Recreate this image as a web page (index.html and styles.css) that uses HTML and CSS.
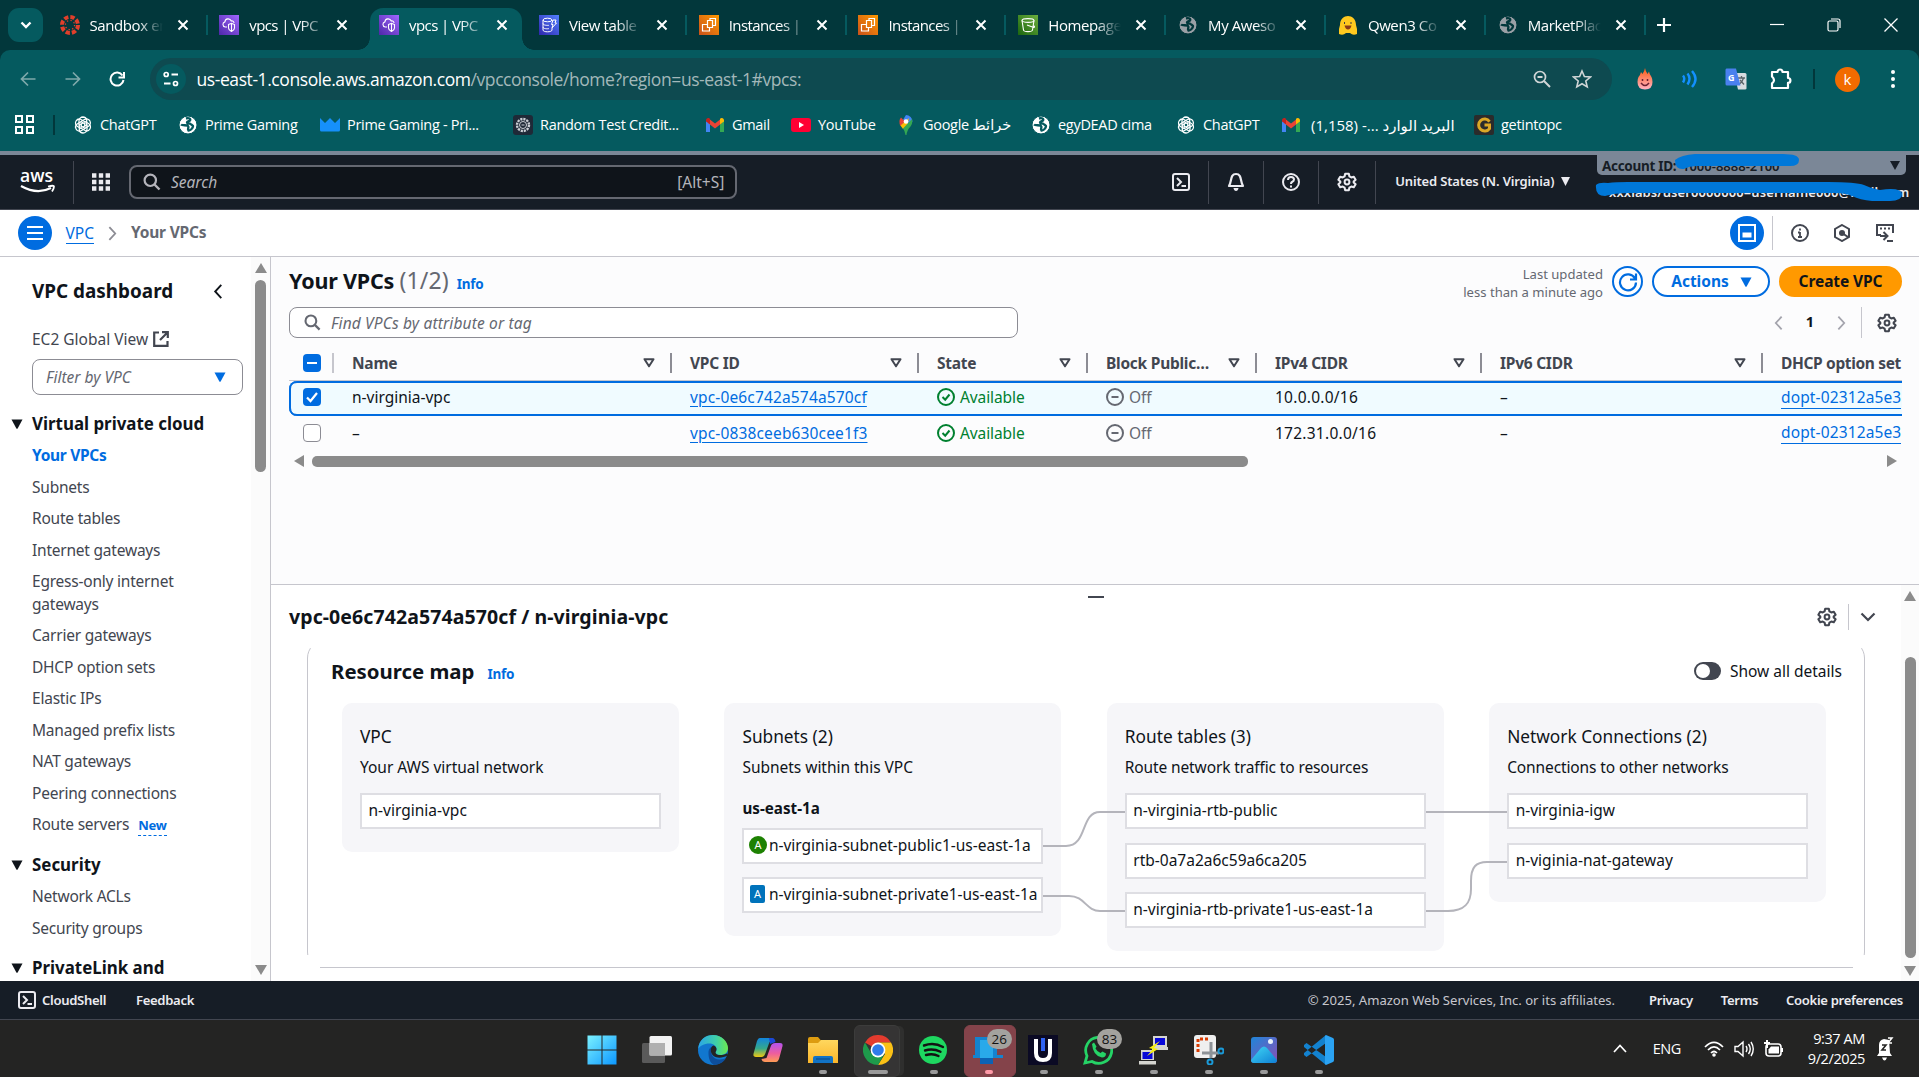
FILE: index.html
```html
<!DOCTYPE html>
<html lang="en">
<head>
<meta charset="utf-8">
<title>vpcs | VPC Console</title>
<link rel="stylesheet" href="styles.css">
</head>
<body>
<svg class="defs" width="0" height="0" aria-hidden="true">
<defs>
<linearGradient id="gPurple" x1="0" y1="1" x2="1" y2="0"><stop offset="0" stop-color="#4d27a8"/><stop offset="1" stop-color="#a166ff"/></linearGradient>
<linearGradient id="gBlue" x1="0" y1="1" x2="1" y2="0"><stop offset="0" stop-color="#2e27ad"/><stop offset="1" stop-color="#527fff"/></linearGradient>
<linearGradient id="gOrange" x1="0" y1="1" x2="1" y2="0"><stop offset="0" stop-color="#c8511b"/><stop offset="1" stop-color="#f90"/></linearGradient>
<linearGradient id="gGreen" x1="0" y1="1" x2="1" y2="0"><stop offset="0" stop-color="#1b660f"/><stop offset="1" stop-color="#6cae3e"/></linearGradient>
<linearGradient id="gWin" gradientUnits="userSpaceOnUse" x1="0" y1="0" x2="30" y2="30"><stop offset="0" stop-color="#7df3ff"/><stop offset="1" stop-color="#0a95ff"/></linearGradient>
<linearGradient id="gEdge" x1="0" y1="0" x2="1" y2="0"><stop offset="0" stop-color="#2aa5e8"/><stop offset=".6" stop-color="#3fd0a8"/><stop offset="1" stop-color="#6ce84f"/></linearGradient>
<linearGradient id="gCopA" x1="0" y1="0" x2="0" y2="1"><stop offset="0" stop-color="#1285dc"/><stop offset=".55" stop-color="#35a98c"/><stop offset="1" stop-color="#f0c811"/></linearGradient>
<linearGradient id="gCopB" x1="0" y1="0" x2="0" y2="1"><stop offset="0" stop-color="#b452f0"/><stop offset=".55" stop-color="#ee5e9d"/><stop offset="1" stop-color="#ff9c54"/></linearGradient>
<linearGradient id="gFold" x1="0" y1="0" x2="0" y2="1"><stop offset="0" stop-color="#ffd75e"/><stop offset="1" stop-color="#fbb62a"/></linearGradient>
<linearGradient id="gFire" x1="0" y1="0" x2="0" y2="1"><stop offset="0" stop-color="#ff5a10"/><stop offset="1" stop-color="#ffb3c4"/></linearGradient>
<linearGradient id="gPhoto" x1="0" y1="0" x2="1" y2="1"><stop offset="0" stop-color="#1f86d9"/><stop offset="1" stop-color="#8a4fb5"/></linearGradient>
<linearGradient id="gPhoto2" x1="0" y1="0" x2="1" y2="1"><stop offset="0" stop-color="#40d8f5"/><stop offset="1" stop-color="#0f7fd4"/></linearGradient>
<symbol id="x" viewBox="0 0 12 12"><path d="M1.500 1.500l9 9M10.500 1.500l-9 9" stroke="#fff" stroke-width="2" fill="none"/></symbol>
<symbol id="vpc" viewBox="0 0 20 20"><path fill="url(#gPurple)" d="M0 0h20v20H0z"/><path d="M8 12H6.200a2.600 2.600 0 0 1-.3-5.100C6.200 3.200 11 2.800 12.300 6c1.700-.4 2.700.8 2.700 2M9.500 9.500l3-1.200 3 1.200v3.500c0 2-3 3.500-3 3.500s-3-1.500-3-3.500zM12.500 9v7" fill="none" stroke="#fff" stroke-width="1.100"/></symbol>
<symbol id="ddb" viewBox="0 0 20 20"><path fill="url(#gBlue)" d="M0 0h20v20H0z"/><ellipse cx="8.500" cy="5" rx="4.500" ry="1.800" fill="none" stroke="#fff"/><path d="M4 5v10c0 2.400 9 2.400 9 0v-2M4 8.500c0 2 5 2 6 1.800M4 12c0 2 5 2 6 1.500M13 5v1M14 5h3l-1 3h1.500L13 13l1-3.500h-1.500z" fill="none" stroke="#fff"/></symbol>
<symbol id="ec2" viewBox="0 0 20 20"><path fill="url(#gOrange)" d="M0 0h20v20H0z"/><path d="M8.500 5.500h5v7h-5zM11 5.500v-2h5.500v7h-3M8.500 9.500h-5v6.500h7v-3.500" fill="none" stroke="#fff" stroke-width="1.200"/></symbol>
<symbol id="s3" viewBox="0 0 20 20"><path fill="url(#gGreen)" d="M0 0h20v20H0z"/><ellipse cx="10" cy="5.500" rx="6" ry="1.900" fill="none" stroke="#fff" stroke-width="1.100"/><path d="M4 5.500L5.500 15c.5 2.200 8.500 2.200 9 0L16 5.500M9 10l6 2.300c2.500.4 1.500-1.500 0-2" fill="none" stroke="#fff" stroke-width="1.100"/></symbol>
<symbol id="globe" viewBox="0 0 20 20"><circle cx="10" cy="10" r="9" fill="currentColor"/><path d="M8 3.500c3-1 5 .5 4 2-.5 1-3 .5-3 2s2.500.5 3.500 1.500 3 1 2.500 2.500c-.7 2.500-3 4-4.500 4-1.500-2 1-3-.5-4.500S4.500 11 3 9.500" class="cut" fill="none" stroke-width="2.400"/></symbol>
<symbol id="gpt" viewBox="0 0 20 20"><g fill="none" stroke="#fff" stroke-width="1.300"><path id="petal" d="M10 2a4 4 0 0 1 3.700 2.500v5.500L9.500 12.300M10 2a4 4 0 0 0-4 4v4.500"/><use href="#petal" transform="rotate(60 10 10)"/><use href="#petal" transform="rotate(120 10 10)"/><use href="#petal" transform="rotate(180 10 10)"/><use href="#petal" transform="rotate(240 10 10)"/><use href="#petal" transform="rotate(300 10 10)"/></g></symbol>
<symbol id="gmail" viewBox="0 0 20 20"><path fill="#4285f4" d="M1 5v12h4V8z"/><path fill="#34a853" d="M19 5v12h-4V8z"/><path fill="#ea4335" d="M3 3l7 5.500L17 3v5l-7 5.500L3 8z"/><path fill="#c5221f" d="M1 5.500C1 3 3.200 2.300 5 3.700v5.500L1 6.500z"/><path fill="#fbbc04" d="M19 5.500c0-2.500-2.200-3.200-4-1.800v5.500l4-2.700z"/></symbol>
<symbol id="gear" viewBox="0 0 20 20"><path d="M8.200 1.800h3.600l.6 2.500 1.900 1.100 2.500-.7 1.800 3.100-1.900 1.800v.8l1.900 1.800-1.800 3.100-2.500-.7-1.900 1.100-.6 2.500H8.200l-.6-2.500-1.900-1.100-2.500.7-1.800-3.100 1.900-1.800v-.8L1.400 7.800l1.800-3.100 2.500.7 1.900-1.100z" fill="none" stroke="currentColor" stroke-width="2.100" stroke-linejoin="round"/><circle cx="10" cy="10" r="2.400" fill="none" stroke="currentColor" stroke-width="2"/></symbol>
<symbol id="shell" viewBox="0 0 18 18"><rect x="1" y="1" width="16" height="16" rx="2" fill="none" stroke="currentColor" stroke-width="2"/><path d="M5 5l4 4-4 4M9.500 13H14" fill="none" stroke="currentColor" stroke-width="2"/></symbol>
<symbol id="search" viewBox="0 0 18 18"><circle cx="7.300" cy="7.300" r="5.700" fill="none" stroke="currentColor" stroke-width="2.200"/><path d="M11.500 11.500l5 5" stroke="currentColor" stroke-width="2.400"/></symbol>
<symbol id="filt" viewBox="0 0 12 10"><path d="M1.500 1.200h9L6 8.300z" fill="none" stroke="#424650" stroke-width="2" stroke-linejoin="round"/></symbol>
<symbol id="tri" viewBox="0 0 12 10"><path d="M.5.500h11L6.500 9.700h-1z" fill="currentColor"/></symbol>
<symbol id="left" viewBox="0 0 10 16"><path d="M8.500 1L2 8l6.500 7" fill="none" stroke="currentColor" stroke-width="2"/></symbol>
<symbol id="ok" viewBox="0 0 18 18"><circle cx="9" cy="9" r="8" fill="none" stroke="#00802f" stroke-width="2"/><path d="M5.500 9l2.700 2.700 4.300-5.200" fill="none" stroke="#00802f" stroke-width="2"/></symbol>
<symbol id="off" viewBox="0 0 18 18"><circle cx="9" cy="9" r="8" fill="none" stroke="#656871" stroke-width="2"/><path d="M5.500 9h7" stroke="#656871" stroke-width="2"/></symbol>
</defs>
</svg>

<div class="tabs">
  <div class="tabsearch"><svg width="12" height="8" viewBox="0 0 12 8"><path d="M1.500 1.500L6 6l4.500-4.500" fill="none" stroke="#fff" stroke-width="2.400"/></svg></div>
  <div class="tab"><svg class="fav" viewBox="0 0 20 20"><circle cx="10" cy="10" r="8" fill="none" stroke="#e13f2b" stroke-width="4" stroke-dasharray="4.300 2"/><circle cx="10" cy="10" r="4.600" fill="none" stroke="#e13f2b" stroke-width="1.300" stroke-dasharray="1.300 2.300"/></svg><span>Sandbox en</span><svg class="cl"><use href="#x"/></svg><i></i></div>
  <div class="tab"><svg class="fav"><use href="#vpc"/></svg><span class="sh">vpcs | VPC</span><svg class="cl"><use href="#x"/></svg></div>
  <div class="tab active"><svg class="fav"><use href="#vpc"/></svg><span class="sh">vpcs | VPC</span><svg class="cl"><use href="#x"/></svg></div>
  <div class="tab"><svg class="fav"><use href="#ddb"/></svg><span>View table</span><svg class="cl"><use href="#x"/></svg><i></i></div>
  <div class="tab"><svg class="fav"><use href="#ec2"/></svg><span class="sh">Instances |</span><svg class="cl"><use href="#x"/></svg><i></i></div>
  <div class="tab"><svg class="fav"><use href="#ec2"/></svg><span class="sh">Instances |</span><svg class="cl"><use href="#x"/></svg><i></i></div>
  <div class="tab"><svg class="fav"><use href="#s3"/></svg><span>Homepage</span><svg class="cl"><use href="#x"/></svg><i></i></div>
  <div class="tab"><svg class="fav gray"><use href="#globe"/></svg><span>My Aweso</span><svg class="cl"><use href="#x"/></svg><i></i></div>
  <div class="tab"><svg class="fav" viewBox="0 0 20 20"><path d="M1 19v-5l1-4c0-12 16-12 16 0l1 4v5q-4 2-7-1H8q-3 3-7 1z" fill="#ffc91f"/><path d="M6 8h1M12.500 8h1" stroke="#3a3b45" stroke-width="2"/><path d="M6.500 10.500h7q-1 4-3.500 4t-3.500-4z" fill="#8b3a16"/></svg><span>Qwen3 Co</span><svg class="cl"><use href="#x"/></svg><i></i></div>
  <div class="tab"><svg class="fav gray"><use href="#globe"/></svg><span>MarketPlac</span><svg class="cl"><use href="#x"/></svg><i></i></div>
  <svg class="plus" width="14" height="14" viewBox="0 0 14 14"><path d="M7 0v14M0 7h14" stroke="#fff" stroke-width="2.200"/></svg>
  <div class="wctl">
    <svg width="14" height="14" viewBox="0 0 14 14"><path d="M0 6.500h14" stroke="#fff" stroke-width="1.200"/></svg>
    <svg width="14" height="14" viewBox="0 0 14 14"><rect x="1" y="3" width="10" height="10" rx="1.500" fill="none" stroke="#fff" stroke-width="1.200"/><path d="M4 1h7q2 0 2 2v7" fill="none" stroke="#fff" stroke-width="1.200"/></svg>
    <svg width="14" height="14" viewBox="0 0 14 14"><path d="M.5.500l13 13M13.500.500l-13 13" stroke="#fff" stroke-width="1.300"/></svg>
  </div>
</div>

<div class="nav">
  <svg width="16" height="16" viewBox="0 0 16 16"><path d="M15.500 8H1.500M8 1.500L1.500 8 8 14.500" fill="none" stroke="#7fa9ab" stroke-width="1.700"/></svg>
  <svg width="16" height="16" viewBox="0 0 16 16"><path d="M.5 8h14M8 1.500L14.500 8 8 14.500" fill="none" stroke="#7fa9ab" stroke-width="1.700"/></svg>
  <svg width="16" height="16" viewBox="0 0 16 16"><path d="M13.500 4.500A6.500 6.500 0 1 0 14.500 9M15 1v5.500H9.500" fill="none" stroke="#fff" stroke-width="2"/></svg>
  <div class="omni">
    <div class="site"><svg width="16" height="16" viewBox="0 0 16 16"><path d="M8.500 3.500H15M1 12.500h6.500" stroke="#fff" stroke-width="1.800"/><circle cx="3.200" cy="3.500" r="2" fill="none" stroke="#fff" stroke-width="1.700"/><circle cx="12.500" cy="12.500" r="2" fill="none" stroke="#fff" stroke-width="1.700"/></svg></div>
    <div class="url">us-east-1.console.aws.amazon.com<span>/vpcconsole/home?region=us-east-1#vpcs:</span></div>
    <svg class="zo" width="18" height="18" viewBox="0 0 18 18"><circle cx="7" cy="7" r="5.500" fill="none" stroke="#d0d5d6" stroke-width="1.700"/><path d="M11 11l6 6M4.500 7h5" stroke="#d0d5d6" stroke-width="2"/></svg>
    <svg width="20" height="20" viewBox="0 0 20 20"><path d="M10 2l2.400 5.500 6 .5-4.600 4 1.400 5.900L10 14.700 4.800 17.900 6.200 12 1.600 8l6-.5z" fill="none" stroke="#d0d5d6" stroke-width="1.600"/></svg>
  </div>
  <div class="exts">
    <svg width="18" height="22" viewBox="0 0 18 22"><path d="M9 0q.5 3 2.500 6L13 3.500q.5 3 2.500 5.500 1 2 1 5 0 7.500-7.500 7.500T1.500 14q0-3 1-5Q4.500 6.500 5 4l1.500 2Q8.500 3 9 0z" fill="url(#gFire)"/><path d="M5 15q4 5 8 0M6.500 11v2M11.500 11v2" fill="none" stroke="#6b2030" stroke-width="1.500"/></svg>
    <svg width="18" height="18" viewBox="0 0 18 18"><path d="M2 5.500q2.500 3 0 7M6.500 3.500q4 5 0 11M11 1q7 8 0 16" fill="none" stroke="#1390ff" stroke-width="2.400"/></svg>
    <svg width="22" height="22" viewBox="0 0 22 22"><path d="M9 5h11q1.500 0 1.500 1.500v14q0 1-1.500 1h-7z" fill="#d8dce0"/><path d="M13 10h7M16.500 8v2M18.500 10q-1 4-4 6M15 12l4 4.500" fill="none" stroke="#5a6368" stroke-width="1.300"/><path d="M1.500.500H11l4.500 17H2Q.5 17.500.5 16V2Q.5.500 1.500.500z" fill="#4a80ee"/><text x="3" y="12.500" class="tg">G</text></svg>
    <svg width="22" height="22" viewBox="0 0 22 22"><path d="M2 4h5.500a2.500 2.500 0 0 1 5 0H18v6a2.400 2.400 0 0 1 0 4.800V20H2v-4.500q4-3 0-7z" fill="none" stroke="#fff" stroke-width="2.200" stroke-linejoin="round"/></svg>
    <i></i>
    <b>k</b>
    <svg width="6" height="20" viewBox="0 0 6 20"><circle cx="3" cy="3" r="2" fill="#fff"/><circle cx="3" cy="10" r="2" fill="#fff"/><circle cx="3" cy="17" r="2" fill="#fff"/></svg>
  </div>
</div>

<div class="marks">
  <svg class="apps" width="19" height="19" viewBox="0 0 19 19"><path d="M1 1h6v6H1zM12 1h6v6h-6zM1 12h6v6H1zM12 12h6v6h-6z" fill="none" stroke="#fff" stroke-width="2"/></svg>
  <i></i>
  <div class="bm w1"><svg><use href="#gpt"/></svg>ChatGPT</div>
  <div class="bm w2"><svg class="wh"><use href="#globe"/></svg>Prime Gaming</div>
  <div class="bm w3"><svg viewBox="0 0 20 20"><path d="M0 3l5 5 5-5 5 5 5-5v12q0 1.500-1.500 1.500h-17Q0 16.500 0 15z" fill="#1690fb"/></svg>Prime Gaming - Pri...</div>
  <div class="bm w4"><svg viewBox="0 0 20 20"><rect width="20" height="20" rx="3" fill="#1f2937"/><circle cx="10" cy="10" r="6" fill="none" stroke="#ccd0d6" stroke-width="2.400" stroke-dasharray="2.200 .9"/><circle cx="10" cy="10" r="3.500" fill="none" stroke="#ccd0d6"/><path d="M8.500 10h3" stroke="#ccd0d6"/></svg>Random Test Credit...</div>
  <div class="bm w5"><svg><use href="#gmail"/></svg>Gmail</div>
  <div class="bm w6"><svg viewBox="0 0 20 20"><rect y="3" width="20" height="14" rx="3" fill="#ff0033"/><path d="M8 7v6l5-3z" fill="#fff"/></svg>YouTube</div>
  <div class="bm w7"><svg viewBox="0 0 20 20"><path d="M10 0a6.500 6.500 0 0 1 6.500 6.500L9 13 4.500 9z" fill="#4285f4"/><path d="M5 2.500L9 6.500 4.500 11Q2 6 5 2.500z" fill="#ea4335"/><path d="M4.500 10.500L13 3l-2 9-4 2z" fill="#fbbc04"/><path d="M16 4q1 4-1.500 7.500Q11 15 10.500 20h-1Q9 16 7 13.500z" fill="#34a853"/><circle cx="10" cy="6.500" r="2.300" fill="#fff"/></svg>Google خرائط</div>
  <div class="bm w8"><svg class="wh"><use href="#globe"/></svg>egyDEAD cima</div>
  <div class="bm w9"><svg><use href="#gpt"/></svg>ChatGPT</div>
  <div class="bm w10"><svg><use href="#gmail"/></svg><bdi class="inbox" dir="ltr">(1,158) -... <bdi>البريد الوارد</bdi></bdi></div>
  <div class="bm"><svg viewBox="0 0 20 20"><rect width="20" height="20" rx="2" fill="#2b2b2b"/><path d="M15.500 6.500a6 6 0 1 0 0 7V10H10.500" fill="none" stroke="#dca826" stroke-width="3"/></svg>getintopc</div>
</div>

<header class="aws">
  <svg class="logo" width="36" height="24" viewBox="0 0 36 24"><text x="0" y="11.500" textLength="33" lengthAdjust="spacingAndGlyphs" class="awst">aws</text><path d="M1 16q16 9 30 2" fill="none" stroke="#fff" stroke-width="2.200"/><path d="M28 16.500q6-1.500 6 0 0 2-2 5" fill="none" stroke="#fff" stroke-width="1.800"/></svg>
  <i></i>
  <svg class="grid" width="18" height="18" viewBox="0 0 18 18"><path d="M0 2.500h18M0 9h18M0 15.500h18" stroke="#ebebf0" stroke-width="4.400" stroke-dasharray="4.400 2.400"/></svg>
  <div class="asearch"><svg width="18" height="18"><use href="#search"/></svg><em>Search</em><span>[Alt+S]</span></div>
  <div class="aicons">
    <svg width="18" height="18"><use href="#shell"/></svg><i></i>
    <svg width="18" height="20" viewBox="0 0 18 20"><path d="M9 2C3 2 5 9 2 14h14C13 9 15 2 9 2z" fill="none" stroke="#ebebf0" stroke-width="2.200" stroke-linejoin="round"/><path d="M6.500 16h5q-.5 3-2.500 3t-2.500-3z" fill="#ebebf0"/></svg><i></i>
    <svg width="18" height="18" viewBox="0 0 18 18"><circle cx="9" cy="9" r="8" fill="none" stroke="#ebebf0" stroke-width="2"/><path d="M6 7q0-3 3-3t3 2.500Q12 8 10 9q-1 .5-1 2M9 12.500v2" fill="none" stroke="#ebebf0" stroke-width="2"/></svg><i></i>
    <svg width="20" height="20"><use href="#gear"/></svg><i></i>
  </div>
  <div class="region">United States (N. Virginia)<svg width="9" height="9" viewBox="0 0 12 10" preserveAspectRatio="none"><path d="M0 0h12L6 10z" fill="#ebebf0"/></svg></div>
  <div class="acct">
    <div class="aid"><b>Account ID:</b><span>1000-8888-2100</span><svg width="10" height="9" viewBox="0 0 12 10" preserveAspectRatio="none"><path d="M0 0h12L6 10z" fill="#161d26"/></svg></div>
    <div class="auser">xxxlabs/user0000000=username000@mail.com</div>
    <svg class="scrib" width="322" height="55" viewBox="0 0 322 55"><path d="M86 8q6-5 20-6h88q16 0 16 6 0 6-9 6h-92q-9 0-14 3-9 1-9-9z" fill="#0078d9"/><path d="M7 33q3-3 12-2 8-1 20-1h200q28 0 36 3 8 4 16 5 21-3 22 4 0 7-12 7h-18q-12-1-20-5-6-3-18-3H40q-14 0-24 3-10 0-9-11z" fill="#0078d9"/></svg>
  </div>
</header>

<div class="crumbs">
  <div class="menu"><svg width="16" height="16" viewBox="0 0 16 16"><path d="M0 2h16M0 8h16M0 14h16" stroke="#fff" stroke-width="2"/></svg></div>
  <a class="vpcl">VPC</a>
  <svg class="flip" width="9" height="15"><use href="#left"/></svg>
  <b>Your VPCs</b>
  <div class="tools">
    <div class="menu"><svg width="18" height="18" viewBox="0 0 18 18"><rect x="1" y="1" width="16" height="16" fill="none" stroke="#fff" stroke-width="2"/><path d="M4.500 8.500h9v5h-9z" fill="#fff"/></svg></div><i></i>
    <svg width="18" height="18" viewBox="0 0 18 18"><circle cx="9" cy="9" r="8" fill="none" stroke="#424650" stroke-width="2"/><path d="M9 8v5.500M9 4.500v2M7 8.500h2M7 13h4" stroke="#424650" stroke-width="1.800"/></svg>
    <svg width="18" height="18" viewBox="0 0 18 18"><path d="M9 1l7 4v8l-7 4-7-4V5z" fill="none" stroke="#424650" stroke-width="2"/><circle cx="9" cy="9" r="3" fill="#424650"/><path d="M9 9l6 4" stroke="#424650" stroke-width="2"/></svg>
    <svg width="20" height="20" viewBox="0 0 20 20"><path d="M6 12H2V2h16v8M12 18h6M5 13h7M8.500 9l4 4-4 4" fill="none" stroke="#424650" stroke-width="2"/><path d="M5 5.500h10" stroke="#424650" stroke-width="2" stroke-dasharray="2 2"/></svg>
  </div>
</div>

<div class="body">
  <nav class="side">
    <div class="list">
      <div class="dash">VPC dashboard<svg width="10" height="15"><use href="#left"/></svg></div>
      <div class="egv">EC2 Global View<svg width="16" height="16" viewBox="0 0 16 16"><path d="M6 1.500H1.200v13.300h13.300V10M9 1.200h5.800V7M14.500 1.500L7 9" fill="none" stroke="#424650" stroke-width="2.200"/></svg></div>
      <div class="sel"><em>Filter by VPC</em><svg width="12" height="10"><use href="#tri"/></svg></div>
      <h4 class="first"><svg width="12" height="10"><use href="#tri"/></svg>Virtual private cloud</h4>
      <a class="cur">Your VPCs</a><a>Subnets</a><a>Route tables</a><a>Internet gateways</a><a class="two">Egress-only internet gateways</a><a>Carrier gateways</a><a>DHCP option sets</a><a>Elastic IPs</a><a>Managed prefix lists</a><a>NAT gateways</a><a>Peering connections</a><a>Route servers<b>New</b></a>
      <h4><svg width="12" height="10"><use href="#tri"/></svg>Security</h4>
      <a>Network ACLs</a><a>Security groups</a>
      <h4><svg width="12" height="10"><use href="#tri"/></svg>PrivateLink and</h4>
    </div>
    <div class="vs"><s class="up"></s><u></u><s class="dn"></s></div>
  </nav>

  <main>
    <section class="top">
      <div class="hd"><h1>Your VPCs <span>(1/2)</span></h1><a class="info">Info</a>
        <div class="upd">Last updated<br>less than a minute ago</div>
        <div class="btn round"><svg width="20" height="20" viewBox="0 0 20 20"><path d="M17 6.500A8 8 0 1 0 18 10.500M18 1.500v6h-6" fill="none" stroke="#006ce0" stroke-width="2.200"/></svg></div>
        <div class="btn act">Actions<svg width="12" height="10"><use href="#tri"/></svg></div>
        <div class="btn cre">Create VPC</div>
      </div>
      <div class="sr">
        <div class="find"><svg width="17" height="17"><use href="#search"/></svg><em>Find VPCs by attribute or tag</em></div>
        <div class="pager"><svg width="9" height="16"><use href="#left"/></svg><b>1</b><svg class="flip" width="9" height="16"><use href="#left"/></svg><i></i><svg class="gr" width="20" height="20"><use href="#gear"/></svg></div>
      </div>
      <div class="tbl">
        <div class="row th"><div class="c0"><span class="cb on"><svg width="18" height="18" viewBox="0 0 18 18"><path d="M4 9h10" stroke="#fff" stroke-width="2"/></svg></span></div>
          <div>Name<svg><use href="#filt"/></svg></div><div>VPC ID<svg><use href="#filt"/></svg></div><div>State<svg><use href="#filt"/></svg></div><div><span class="bp">Block Public…</span><svg><use href="#filt"/></svg></div><div>IPv4 CIDR<svg><use href="#filt"/></svg></div><div>IPv6 CIDR<svg><use href="#filt"/></svg></div><div>DHCP option set</div></div>
        <div class="row r1"><div class="c0"><span class="cb on"><svg width="18" height="18" viewBox="0 0 18 18"><path d="M4 9.500l3.500 3.500L14 5" fill="none" stroke="#fff" stroke-width="2.200"/></svg></span></div>
          <div>n-virginia-vpc</div><div><a class="ln">vpc-0e6c742a574a570cf</a></div><div class="av"><svg><use href="#ok"/></svg>Available</div><div class="of"><svg><use href="#off"/></svg>Off</div><div class="ip">10.0.0.0/16</div><div>–</div><div><a class="ld">dopt-02312a5e3</a></div></div>
        <div class="row r2"><div class="c0"><span class="cb"></span></div>
          <div>–</div><div><a class="ln">vpc-0838ceeb630cee1f3</a></div><div class="av"><svg><use href="#ok"/></svg>Available</div><div class="of"><svg><use href="#off"/></svg>Off</div><div class="ip">172.31.0.0/16</div><div>–</div><div><a class="ld">dopt-02312a5e3</a></div></div>
      </div>
      <div class="hs"><s></s><u></u><s class="r"></s></div>
    </section>
    <section class="split">
      <div class="pane">
        <div class="grip"><i></i></div>
        <div class="ph"><h2>vpc-0e6c742a574a570cf / n-virginia-vpc</h2><svg width="20" height="20"><use href="#gear"/></svg><i></i><svg width="16" height="10" viewBox="0 0 16 10"><path d="M1.500 1.500L8 8l6.500-6.500" fill="none" stroke="#424650" stroke-width="2.200"/></svg></div>
        <div class="clip">
        <div class="card">
          <div class="ch"><h3>Resource map</h3><a class="info">Info</a><div class="tog"></div><span>Show all details</span></div>
          <div class="map">
            <div class="col"><h5>VPC</h5><p>Your AWS virtual network</p><div class="nd">n-virginia-vpc</div></div>
            <div class="col"><h5>Subnets (2)</h5><p>Subnets within this VPC</p><h6>us-east-1a</h6><div class="nd sn"><span class="pub">A</span>n-virginia-subnet-public1-us-east-1a</div><div class="nd sn"><span class="prv">A</span>n-virginia-subnet-private1-us-east-1a</div></div>
            <div class="col"><h5>Route tables (3)</h5><p>Route network traffic to resources</p><div class="nd">n-virginia-rtb-public</div><div class="nd">rtb-0a7a2a6c59a6ca205</div><div class="nd">n-virginia-rtb-private1-us-east-1a</div></div>
            <div class="col"><h5>Network Connections (2)</h5><p>Connections to other networks</p><div class="nd">n-virginia-igw</div><div class="nd">n-viginia-nat-gateway</div></div>
            <svg class="wires" width="1485" height="248" viewBox="342 703 1485 248"><path d="M1043 846h23c22 0 14-34 34-34h25M1043 896h26c16 0 17 15 31 15h25M1426 812h81M1426 911h22c17 0 23-8 23-22v-8c0-14 5-19 16-19h20" fill="none" stroke="#b4b4bb" stroke-width="2"/></svg>
          </div>
        </div>
        </div>
        <div class="cbot"></div>
      </div>
      <div class="vs2"><s class="up"></s><u></u><s class="dn"></s></div>
    </section>
  </main>
</div>

<footer><svg width="18" height="18"><use href="#shell"/></svg><span class="f1">CloudShell</span><span class="f2">Feedback</span><span class="cp">© 2025, Amazon Web Services, Inc. or its affiliates.</span><span class="f3">Privacy</span><span class="f4">Terms</span><span class="f5">Cookie preferences</span></footer>

<div class="task">
  <div class="dock">
    <div><svg viewBox="0 0 30 30"><path d="M.5.500h14v14H.5zM15.500.500h14v14h-14zM.5 15.500h14v14H.5zM15.500 15.500h14v14h-14z" fill="url(#gWin)"/></svg></div>
    <div><svg viewBox="0 0 30 30"><rect x="0" y="8" width="23" height="20" rx="1.500" fill="#5a5a5a"/><rect x="7.500" y="1" width="22.500" height="19.500" rx="1.500" fill="#f2f2f2"/><path d="M7.500 8H23v12.500H7.500z" fill="#b0b0b0"/></svg></div>
    <div><svg viewBox="0 0 30 30"><circle cx="15" cy="15" r="15" fill="#1177cf"/><path d="M.2 14C1 4 8 0 15 0c9 0 15 7 15 13 0 5-4 7-7.500 7-3 0-5-1-5-2.500 0-1 1-1.500 1-3.500 0-3-3-5.500-7-5.500C6 8.500 1.500 11 .2 14z" fill="url(#gEdge)"/><path d="M10.500 18c0-4 2-6 4-6.500-3 5-1 13 7.500 13 3 0 5-1 6-1.500-2 4-7 7-12 7-4-2-5.500-7-5.500-12z" fill="#0d4e9c"/><path d="M17.500 17.500c0-1 1-1.500 1-3.500s-1.500-3-3-3.500c-3 1-4 7 0 10.500 4 2.500 9 2 14-.5 0 0 .5-2-1-2-4 2.500-11 2-11-1z" fill="#242423"/></svg></div>
    <div><svg viewBox="0 0 30 30"><path d="M7 3h11c2 0 3 1 3.500 3l-5 1-4 11c-1 3-2 4-5 4H3c-3 0-3-2-2-5l3-11C5 4 5.500 3 7 3z" fill="url(#gCopA)"/><path d="M16 3h3q3 0 3.500 4L17 9z" fill="#1b48d8"/><path d="M23 27H12c-2 0-3-1-3.500-3l5-1 4-11c1-3 2-4 5-4H27c3 0 3 2 2 5l-3 11c-1 2-1.500 3-3 3z" fill="url(#gCopB)"/></svg></div>
    <div class="run"><svg viewBox="0 0 30 30"><path d="M0 4q0-2 2-2h8l3 3.500h15q2 0 2 2V12H0z" fill="#dd9c10"/><path d="M0 8h10l3-3h17v23H0z" fill="url(#gFold)"/><path d="M5 28v-5q0-2 2-2h16q2 0 2 2v5z" fill="#1273c5"/><path d="M8 24h14" stroke="#0b4d8c" stroke-width="1.200"/></svg></div>
    <div class="run now"><svg viewBox="0 0 30 30"><path d="M15 15L2 7.500A15 15 0 0 1 28 7.500H15z" fill="#e33b2e"/><path d="M15 7.500h13A15 15 0 0 1 15 30l7-11z" fill="#fbc116"/><path d="M2 7.500A15 15 0 0 0 15 30l6.500-11.200L8.500 18.800z" fill="#1e9a4b"/><circle cx="15" cy="15" r="7.400" fill="#fff"/><circle cx="15" cy="15" r="5.800" fill="#2f7bea"/></svg></div>
    <div class="run"><svg viewBox="0 0 30 30"><circle cx="15" cy="15" r="14" fill="#1ed760"/><path d="M6 10.500q10-3.500 19 1.500M7 15.500q8-2.500 15.500 1.300M8 20q7-2 12.500 1" fill="none" stroke="#121212" stroke-width="2.400" stroke-linecap="round"/></svg></div>
    <div class="run att"><svg viewBox="0 0 30 30"><path d="M2 2h22v18H2zM0 20h30v3H0z" fill="#1483d0"/><path d="M7 5h13v24H7z" fill="#29a9ea"/><path d="M7 23h13v6H7z" fill="#0b62b5"/></svg><b>26</b></div>
    <div class="run"><svg viewBox="0 0 30 30"><path fill="#0b0a24" d="M0 0h30v30H0z"/><path d="M8 4v14q0 7 7 7t7-7V4" fill="none" stroke="#fff" stroke-width="4"/><path d="M13 3h4v13h-4z" fill="#3063f2"/></svg></div>
    <div class="run"><svg viewBox="0 0 30 30"><path d="M2 28l2-7A13 13 0 1 1 9 26.500z" fill="none" stroke="#25d366" stroke-width="2.800"/><path d="M9 9l2-1.500 2.500 4-1 2q1.500 3 5 4.500l2-1.500 3.500 2q0 4-4 4Q10 21 9 9z" fill="#25d366"/></svg><b>83</b></div>
    <div class="run"><svg viewBox="0 0 30 30"><path d="M14 1h14v11H14z" fill="#d5d5d0"/><path d="M16 3h10v7H16z" fill="#0808d8"/><path d="M13 12h16v3H13zM2 15h13v10H2zM0 26h17v3.500H0z" fill="#d5d5d0"/><path d="M3.500 17h10v7h-10z" fill="#0808d8"/><path d="M21 6L10 13l4 1-6 7 11-7-4-1z" fill="#f7ef10"/></svg></div>
    <div class="run"><svg viewBox="0 0 30 30"><rect x="0" y="0" width="22" height="23" rx="3" fill="#efefef"/><path d="M4 17V4h12" fill="none" stroke="#d83b01" stroke-width="3" stroke-dasharray="3 2"/><path d="M17 7v16M8 18h17" stroke="#8d9297" stroke-width="3"/><circle cx="27" cy="16" r="2.500" fill="none" stroke="#1b9ad8" stroke-width="2"/><circle cx="16" cy="27" r="2.500" fill="none" stroke="#1b9ad8" stroke-width="2"/></svg></div>
    <div class="run"><svg viewBox="0 0 30 30"><rect x="2" y="2" width="26" height="26" rx="3" fill="url(#gPhoto)"/><path d="M2 25l10-12q3-3 6 0l10 12q0 3-3 3H5q-3 0-3-3z" fill="url(#gPhoto2)"/><circle cx="21.500" cy="6.500" r="2.500" fill="#e9f2fa"/></svg></div>
    <div class="run"><svg viewBox="0 0 30 30"><path d="M0 10l2.500-2L22 22v8L0 12zM0 20l2.500 2L22 8V0L0 18z" fill="#1382cf"/><path d="M22 0l7 3q1 .5 1 2v20q0 1.500-1 2l-7 3-1-1V1z" fill="#2ba3f3"/></svg></div>
  </div>
  <div class="tray">
    <svg class="t1" width="14" height="9" viewBox="0 0 14 9"><path d="M1 8l6-6.500L13 8" fill="none" stroke="#fff" stroke-width="1.700"/></svg>
    <span class="eng">ENG</span>
    <svg class="t2" width="20" height="16" viewBox="0 0 20 16"><path d="M1 6q9-9 18 0M4 9q6-6 12 0M7 12q3-3 6 0" fill="none" stroke="#fff" stroke-width="1.700"/><circle cx="10" cy="14" r="1.800" fill="#fff"/></svg>
    <svg class="t3" width="20" height="18" viewBox="0 0 20 18"><path d="M1 6.500h3L9 2v14l-5-4.500H1zM12 6q2 3 0 6M14.500 4q3.500 5 0 10M17 2q4.500 7 0 14" fill="none" stroke="#fff" stroke-width="1.400"/></svg>
    <svg class="t4" width="20" height="18" viewBox="0 0 20 18"><rect x="2" y="4" width="15" height="12" rx="3" fill="none" stroke="#fff" stroke-width="1.600"/><path d="M7 6.500h8v7H4.500v-4z" fill="#fff"/><path d="M18 8v4M3 0v4M0 3h6M3 3v5" stroke="#fff" stroke-width="2"/></svg>
    <div class="clock">9:37 AM<br>9/2/2025</div>
    <svg class="t5" width="18" height="24" viewBox="0 0 18 24"><path d="M1 19l2-3V8q0-5 5-6l5 1 1 13 2 3z" fill="#fff"/><path d="M6 20.500h5q-1 3-2.500 3T6 20.500z" fill="#fff"/><path d="M6 8h4l-4 5h4" fill="none" stroke="#242423" stroke-width="1.600"/><path d="M12 1h4l-4 5h4" fill="none" stroke="#fff" stroke-width="1.500"/></svg>
  </div>
</div>
</body>
</html>
```
FILE: styles.css
```css
* { box-sizing: border-box; }
body { margin: 0; width: 1919px; height: 1077px; overflow: hidden; display: flex; flex-direction: column; background: #fff; font: 15.5px/22px "Noto Sans", "Open Sans", sans-serif; color: #0f141a; }
body > * { flex: none; }
svg { display: block; flex: none; }
.defs { position: absolute; }
i, s, u { flex: none; }
h1, h2, h3, h4, h5, h6, p { margin: 0; }

/* browser tab strip */
.tabs { height: 50px; background: #02373b; display: flex; align-items: center; color: #fff; font: 15px "Open Sans", sans-serif; }
.tabsearch { width: 35px; height: 34px; margin: 0 7px 0 8px; border-radius: 11px; background: #055a5f; display: flex; align-items: center; justify-content: center; }
.tab { width: 159.800px; height: 50px; padding-left: 9.500px; display: flex; align-items: center; }
.tab .fav { width: 20px; height: 20px; }
.tab .gray { color: #9aa0a6; stroke: #02373b; }
.cut { stroke: inherit; }
.tab span { width: 73px; margin: 0 14px 0 10px; overflow: hidden; white-space: nowrap; letter-spacing: -.4px; -webkit-mask-image: linear-gradient(90deg, #000 65%, transparent); mask-image: linear-gradient(90deg, #000 65%, transparent); }
.tab span.sh { letter-spacing: -.6px; -webkit-mask-image: linear-gradient(90deg, #000 70%, #0004); mask-image: linear-gradient(90deg, #000 70%, #0004); }
.tab .cl { width: 12px; height: 12px; }
.tab i { width: 2px; height: 20px; margin-left: 17px; background: #055a5f; }
.tab.active { position: relative; }
.tab.active::before { content: ""; position: absolute; left: 0; top: 8px; width: 152px; height: 42px; background: #055a5f; border-radius: 13px 13px 0 0; z-index: 0; }
.tab.active::after { content: ""; position: absolute; left: -12px; bottom: 0; width: 176px; height: 12px; background: radial-gradient(circle at 0 0, transparent 11.500px, #055a5f 12px) left / 12px 12px no-repeat, radial-gradient(circle at 100% 0, transparent 11.500px, #055a5f 12px) right / 12px 12px no-repeat; }
.tab.active > * { position: relative; z-index: 1; }
.plus { margin-left: 9px; }
.wctl { display: flex; gap: 43px; margin-left: auto; padding-right: 21px; }

/* address row */
.nav { height: 58px; background: #055a5f; display: flex; align-items: center; padding-left: 20px; gap: 28.500px; border-radius: 10px 10px 0 0; box-shadow: 0 -10px 0 0 #02373b; position: relative; z-index: -1; }
.omni { width: 1462px; height: 42px; margin-left: -4px; border-radius: 21px; background: #0e4a50; display: flex; align-items: center; padding: 0 20px 0 6px; }
.site { width: 30px; height: 30px; border-radius: 50%; background: #055a5f; display: flex; align-items: center; justify-content: center; }
.url { margin-left: 11px; flex: 1; font: 17.500px "Open Sans", sans-serif; letter-spacing: -.42px; color: #fff; }
.url span { color: #a3b8ba; }
.omni .zo { margin-right: 21px; }
.exts { display: flex; align-items: center; }
.exts svg:nth-child(1) { margin-left: -4px; }
.exts svg:nth-child(2) { margin-left: 27px; }
.exts svg:nth-child(3) { margin-left: 26px; }
.exts svg:nth-child(4) { margin-left: 23px; }
.exts i { width: 2px; height: 20px; background: #02373b; margin-left: 21px; }
.exts b { width: 25px; height: 25px; border-radius: 50%; background: #f26b00; color: #fff; font: 15px/24px "Open Sans", sans-serif; text-align: center; margin-left: 20px; }
.exts svg:last-child { margin-left: 30px; }
.tg { font: 700 9px "Open Sans", sans-serif; fill: #fff; }

/* bookmarks */
.marks { height: 47px; padding: 0 0 10px 15px; background: #055a5f; display: flex; align-items: center; color: #fff; font: 14.500px "Open Sans", "Noto Sans", "DejaVu Sans", sans-serif; letter-spacing: -.3px; border-bottom: 4px solid #7b8797; white-space: nowrap; }
.marks > i { width: 2px; height: 20px; background: #02373b; margin: 0 18px 0 19px; }
.bm { display: flex; align-items: center; gap: 7px; }
.bm svg { width: 20px; height: 20px; }
.bm .wh { color: #fff; stroke: #055a5f; }
.inbox { letter-spacing: 0; font-size: 15px; margin-left: 3px; }
.w1 { width: 105px; } .w2 { width: 142px; } .w3 { width: 193px; } .w4 { width: 192px; } .w5 { width: 86px; } .w6 { width: 105px; } .w7 { width: 135px; } .w8 { width: 145px; } .w9 { width: 105px; } .w10 { width: 193px; }

/* AWS header */
.aws { height: 55px; background: #161d26; border-bottom: 1px solid #424650; display: flex; align-items: center; color: #ebebf0; padding-left: 20px; }
.awst { font: 600 18px "Open Sans", sans-serif; fill: #fff; }
.aws i { width: 1px; height: 43px; background: #424650; }
.aws > i { margin: 0 18px 0 17px; }
.asearch { width: 609px; height: 34px; margin-left: 19px; border: 2px solid #656871; border-radius: 8px; background: #0f141a; display: flex; align-items: center; padding: 0 11px 0 13px; color: #b4b4bb; }
.asearch em { margin-left: 10px; flex: 1; font-size: 15.500px; }
.asearch svg { margin-left: -1px; }
.aicons { margin-left: 435px; display: flex; align-items: center; }
.aicons i { margin: 0 18px; }
.aicons i:last-child { margin-right: 19px; }
.region { width: 202px; font-size: 13px; font-weight: 600; letter-spacing: -.16px; display: flex; align-items: center; gap: 7px; white-space: nowrap; padding-bottom: 2px; }
.acct { position: relative; width: 322px; height: 55px; flex: none; padding: 0 13px 0 0; font-size: 13px; }
.aid { height: 20px; background: #7b8797; border-radius: 0 0 5px 5px; display: flex; align-items: center; color: #161d26; padding: 2px 6px 0 5px; font-weight: 600; }
.aid b { font-weight: 700; width: 80px; letter-spacing: -.3px; font-size: 13.500px; }
.aid span { flex: 1; }
.auser { font-size: 13px; line-height: 20px; margin: 7px 0 0 12px; white-space: nowrap; font-weight: 600; letter-spacing: .1px; }
.scrib { position: absolute; left: -8px; top: -3px; }

/* breadcrumb bar */
.crumbs { height: 48px; margin-top: -1px; border-top: 1px solid #424650; border-bottom: 1px solid #c6c6cd; display: flex; align-items: center; padding-left: 18px; color: #656871; }
.menu { width: 34px; height: 34px; border-radius: 50%; background: #006ce0; display: flex; align-items: center; justify-content: center; }
.vpcl { color: #006ce0; margin: 0 14px 0 13.500px; border-bottom: 1px solid #006ce0; line-height: 20px; font-size: 15.500px; }
.crumbs b { margin: 0 0 3px 14px; font-weight: 700; font-size: 15.500px; letter-spacing: -.2px; }
.flip { transform: scaleX(-1); color: #8c8c94; }
.tools { margin-left: auto; display: flex; align-items: center; padding-right: 24.500px; }
.tools i { width: 1px; height: 34px; background: #c6c6cd; margin: 0 18px 0 8px; }
.tools svg + svg { margin-left: 24px; }

/* navigation */
.body { height: 724px; display: flex; overflow: hidden; }
.side { width: 271px; border-right: 1px solid #c6c6cd; display: flex; }
.list { width: 251px; overflow: hidden; color: #424650; }
.dash { margin: 23px 28px 0 32px; display: flex; align-items: center; justify-content: space-between; font: 700 18.900px/22px "Noto Sans", sans-serif; color: #0f141a; }
.egv { margin: 25.500px 0 0 32px; display: flex; align-items: center; gap: 5px; }
.sel { margin: 9.500px 8px 0 32px; height: 36px; border: 1px solid #8c8c94; border-radius: 8px; display: flex; align-items: center; justify-content: space-between; padding: 0 16px 0 13px; color: #656871; }
.sel svg { color: #006ce0; }
h4 { margin-top: 14px; height: 22px; display: flex; align-items: center; gap: 9px; padding-left: 11px; font: 700 16.900px/22px "Noto Sans", sans-serif; color: #0f141a; }
h4.first { margin-top: 18px; }
.list a { display: block; padding: 5px 0 4px 32px; height: 31.560px; white-space: nowrap; letter-spacing: -.22px; }
h4 + a { margin-top: 4px; }
.list .two { height: 54px; width: 200px; white-space: normal; line-height: 23px; }
.list .cur { color: #006ce0; font-weight: 700; letter-spacing: -.3px; }
.list b { color: #006ce0; font-size: 13px; line-height: 19px; display: inline-block; margin-left: 9px; border-bottom: 1.500px dashed #006ce0; }
.vs { width: 19px; background: #fbfbfb; display: flex; flex-direction: column; align-items: center; padding-top: 6px; }
s.up, s.dn { border: 6px solid transparent; border-top: 0; border-bottom: 10px solid #8b8b8b; }
s.dn { border-bottom: 0; border-top: 10px solid #8b8b8b; }
.vs u { width: 11px; height: 192px; border-radius: 6px; background: #8b8b8b; margin: 7px 0 493px; }

/* VPC list */
main { flex: 1; min-width: 0; }
.top { height: 327px; background: #fcfcfd; padding: 9px 17px 0 18px; }
.hd { display: flex; align-items: center; height: 31px; color: #0f141a; }
h1 { font: 700 21.500px/28px "Noto Sans", sans-serif; letter-spacing: -.2px; margin-top: -2px; }
h1 span { font-weight: 400; font-size: 23px; letter-spacing: .1px; color: #656871; }
.info { color: #006ce0; font-weight: 700; font-size: 13.500px; letter-spacing: -.2px; margin: 5px 0 0 8px; }
.upd { margin: 3px 9px 0 auto; text-align: right; font-size: 13.100px; line-height: 18px; color: #656871; }
.btn { height: 31px; border: 2px solid #006ce0; border-radius: 16px; color: #006ce0; font-weight: 700; display: flex; align-items: center; justify-content: center; background: #fff; line-height: 20px; padding-bottom: 1px; }
.round { width: 31px; padding: 0; }
.act { width: 118px; gap: 11px; margin: 0 9px; padding-left: 1px; }
.act svg { margin-top: 2px; }
.cre { width: 123px; background: #f90; border-color: #f90; color: #0f141a; letter-spacing: -.1px; }
.sr { display: flex; align-items: center; margin-top: 10px; }
.find { width: 729px; height: 31px; border: 1px solid #8c8c94; border-radius: 8px; background: #fff; display: flex; align-items: center; gap: 9px; padding-left: 14px; color: #656871; letter-spacing: .15px; }
.find em { margin-left: 1px; }
.pager { margin-left: auto; display: flex; align-items: center; color: #a4a4ad; padding-right: 5px; }
.pager b { font-size: 14.500px; color: #0f141a; width: 54px; text-align: center; margin-top: -3px; }
.pager .flip { color: #a4a4ad; }
.pager i { width: 1px; height: 31px; background: #c6c6cd; margin: 0 15px; }
.gr, .ph svg { color: #424650; }
.tbl { width: 1613px; overflow: hidden; margin-top: 7px; }
.row { display: grid; grid-template-columns: 45px 338px 247px 169px 169px 225px 281px 139px; align-items: center; height: 36px; white-space: nowrap; }
.row > div { padding-left: 18px; display: flex; align-items: center; }
.row > .c0 { padding-left: 14px; }
.row > div:last-child { overflow: hidden; }
.th { color: #424650; font-weight: 700; letter-spacing: -.25px; border-bottom: 1px solid #c6c6cd; }
.th > div { border-right: 2px solid #8c8c94; height: 20px; }
.th > .c0 { border-color: #c6c6cd; }
.th > div:last-child { border: 0; letter-spacing: -.35px; }
.th div > svg { width: 12px; height: 10px; margin: 0 15px 0 auto; }
.cb { width: 18px; height: 18px; border: 1px solid #8c8c94; border-radius: 4px; background: #fff; display: block; }
.cb.on { background: #006ce0; border: 0; }
.r1 { height: 35px; background: #f0fbff; box-shadow: inset 2px 0 0 #006ce0, inset 0 2px 0 #006ce0, inset 0 -2px 0 #006ce0; border-radius: 8px 0 0 8px; padding-bottom: 3px; }
.r2 { height: 34px; padding-bottom: 1px; }
.ln { color: #006ce0; text-decoration: underline; text-underline-offset: 3px; letter-spacing: .15px; }
.ld { color: #006ce0; border-bottom: 1px solid #006ce0; letter-spacing: .13px; }
.ip { letter-spacing: .25px; }
.av, .of { gap: 5px; color: #00802f; letter-spacing: -.1px; }
.of { color: #656871; }
.av svg, .of svg { width: 18px; height: 18px; }
.hs { display: flex; align-items: center; margin: 5px 5px 0 5px; height: 12px; }
.hs s { border: 6px solid transparent; border-left: 0; border-right: 10px solid #8b8b8b; }
.hs s.r { border-right: 0; border-left: 10px solid #8b8b8b; margin-left: auto; }
.hs u { width: 936px; height: 11px; border-radius: 5px; background: #8b8b8b; margin-left: 8px; }

/* details split panel */
.split { height: 397px; border-top: 1px solid #c6c6cd; display: flex; }
.pane { flex: 1; padding-left: 18px; }
.grip { height: 19px; padding: 11px 0 0 799px; }
.grip i { display: block; width: 16px; height: 2px; background: #424650; }
.ph { height: 26px; display: flex; align-items: center; padding-right: 25px; }
h2 { font: 700 19.500px/24px "Noto Sans", sans-serif; letter-spacing: .09px; flex: 1; margin-top: -1px; }
.ph i { width: 1px; height: 26px; background: #c6c6cd; margin: 0 11px; }
.clip { height: 307px; margin-top: 18px; overflow: hidden; padding: 0 36px 0 18px; }
.card { margin-top: -8px; height: 330px; border: 1px solid #c6c6cd; border-radius: 18px; padding: 17px 22px 0 23px; }
.ch { display: flex; align-items: center; height: 26px; }
h3 { font: 700 20.400px/26px "Noto Sans", sans-serif; }
.ch .info { margin-left: 13px; }
.tog { width: 27px; height: 18px; border-radius: 9px; background: #424650; margin: 0 9px 0 auto; padding: 2px; }
.tog::before { content: ""; display: block; width: 14px; height: 14px; border-radius: 50%; background: #fff; }
.map { position: relative; display: grid; grid-template-columns: repeat(4, 337px); column-gap: 45.400px; align-items: start; margin: 19px 0 0 11px; }
.col { background: #f6f6f9; border-radius: 10px; padding: 23px 18px; white-space: nowrap; }
h5 { font: 400 17.300px/22px "Noto Sans", sans-serif; }
.col p { margin: 8px 0 15px; line-height: 22px; letter-spacing: -.12px; }
.col:nth-child(-n+2) p { letter-spacing: -.02px; }
h6 { font: 700 15.200px/22px "Noto Sans", sans-serif; margin: 19px 0 8.500px; }
.nd { height: 36px; border: 2px solid #dedee3; background: #fff; padding-left: 6.500px; line-height: 31px; margin-bottom: 13.500px; display: flex; }
.nd:last-child { margin-bottom: 0; }
.sn { padding-left: 4.500px; gap: 2px; }
.pub, .prv { width: 18px; height: 18px; margin-top: 6px; border-radius: 50%; background: #1d8102; color: #fff; font: 11px/18px "Noto Sans", sans-serif; text-align: center; }
.prv { width: 15px; border-radius: 2px; background: #0073bb; margin-right: 2px; margin-left: 1px; }
.wires { position: absolute; left: 0; top: 0; }
.cbot { height: 1px; background: #c6c6cd; margin: 12px 48px 0 31px; }
.vs2 { width: 18px; display: flex; flex-direction: column; align-items: center; padding-top: 6px; background: #fbfbfb; }
.vs2 u { width: 11px; height: 301px; border-radius: 6px; background: #8b8b8b; margin: 56px 0 8px; }

footer { height: 39px; background: #161d26; border-bottom: 1px solid #424650; display: flex; align-items: center; padding: 0 16px 0 18px; color: #ebebf0; font-size: 13.100px; font-weight: 600; letter-spacing: -.33px; white-space: nowrap; }
.f1 { margin-left: 6px; width: 94px; }
.cp { margin-left: auto; font-weight: 400; color: #c6c6cd; letter-spacing: -.02px; }
.f3 { margin-left: 34px; } .f4, .f5 { margin-left: 28px; }

/* desktop taskbar */
.task { height: 57px; background: #242423; display: flex; color: #fff; font: 14.500px/20px "Open Sans", sans-serif; }
.dock { display: flex; margin-left: 574.800px; }
.dock > div { width: 55.130px; height: 55px; position: relative; display: flex; justify-content: center; padding-top: 15px; }
.dock svg { width: 30px; height: 30px; position: relative; }
.run::after { content: ""; position: absolute; bottom: 1px; left: 24px; width: 8px; height: 4px; border-radius: 2px; background: #9a9a9a; }
.now::before, .att::before { content: ""; position: absolute; left: 4px; top: 5px; width: 44px; height: 50px; border-radius: 6px; background: #353434; border: 1px solid #3c3c3b; box-shadow: 5px 0 0 -1px #2f2f2e; }
.now::after { width: 20px; left: 18px; }
.att::before { left: 3px; width: 50px; background: #84434a; border-color: #84434a; box-shadow: none; }
.att::after { background: #ff9aa8; }
.dock b { position: absolute; left: 26px; top: 9px; width: 25px; height: 20px; border-radius: 10px; background: #a3a29e; color: #111; font: 13.500px/20px "Open Sans", sans-serif; text-align: center; }
.tray { margin-left: auto; display: flex; align-items: center; padding-right: 25px; }
.eng { margin: 0 23px 0 26px; letter-spacing: -.4px; }
.t3, .t4 { margin-left: 10px; }
.clock { width: 81px; text-align: right; margin-right: 11px; letter-spacing: -.4px; }
```
